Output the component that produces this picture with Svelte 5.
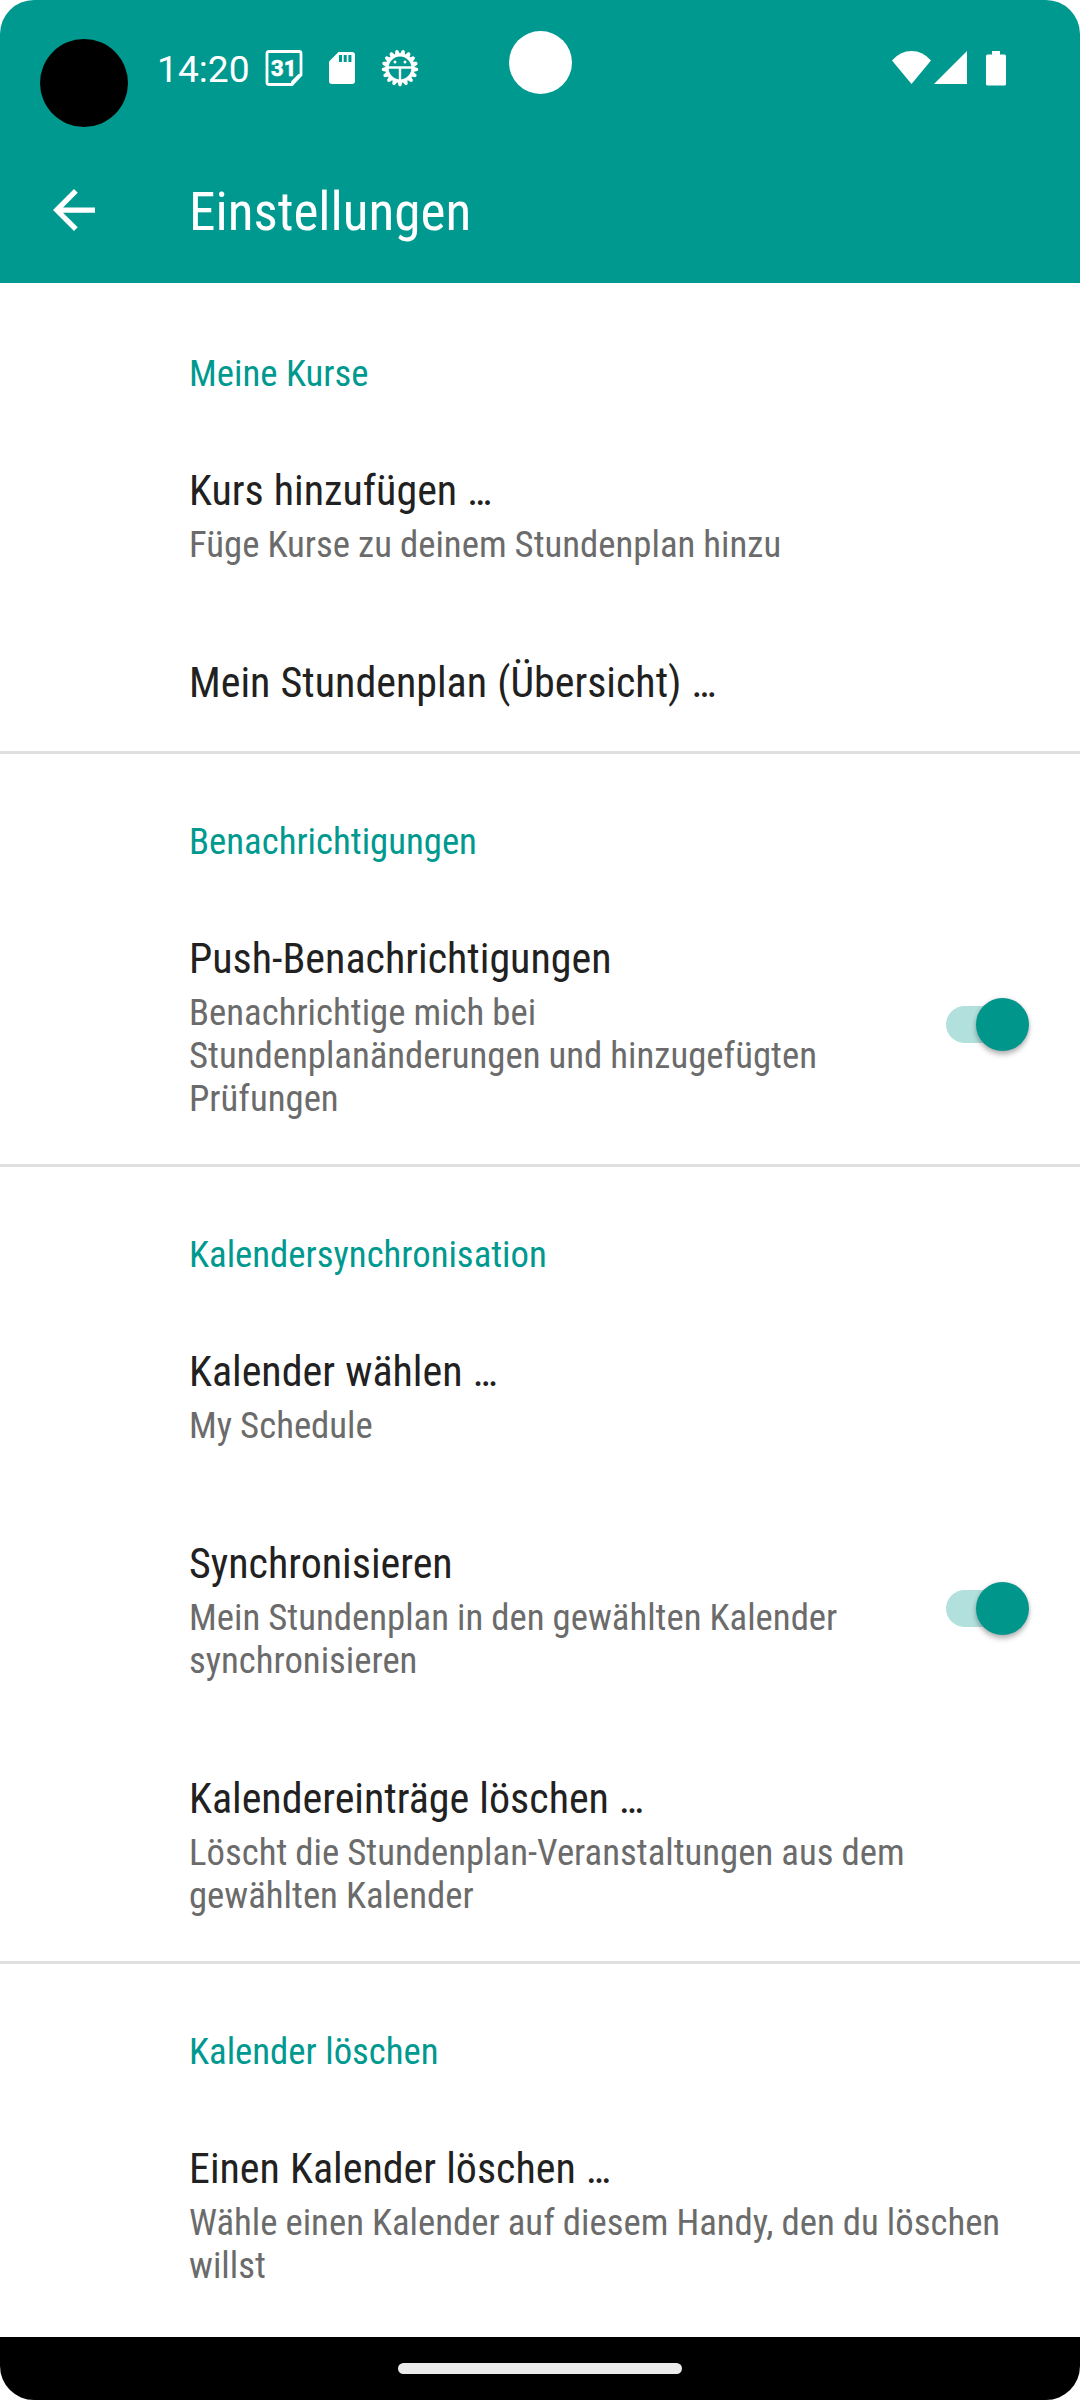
<script>
  const sections = [
    {
      title: 'Meine Kurse',
      items: [
        { title: 'Kurs hinzufügen …', lines: ['Füge Kurse zu deinem Stundenplan hinzu'] },
        { title: 'Mein Stundenplan (Übersicht) …', lines: [] }
      ]
    },
    {
      title: 'Benachrichtigungen',
      items: [
        {
          title: 'Push-Benachrichtigungen',
          lines: ['Benachrichtige mich bei', 'Stundenplanänderungen und hinzugefügten', 'Prüfungen'],
          toggle: true
        }
      ]
    },
    {
      title: 'Kalendersynchronisation',
      items: [
        { title: 'Kalender wählen …', lines: ['My Schedule'] },
        {
          title: 'Synchronisieren',
          lines: ['Mein Stundenplan in den gewählten Kalender', 'synchronisieren'],
          toggle: true
        },
        {
          title: 'Kalendereinträge löschen …',
          lines: ['Löscht die Stundenplan-Veranstaltungen aus dem', 'gewählten Kalender']
        }
      ]
    },
    {
      title: 'Kalender löschen',
      items: [
        {
          title: 'Einen Kalender löschen …',
          lines: ['Wähle einen Kalender auf diesem Handy, den du löschen', 'willst']
        }
      ]
    }
  ];

  // 17 gear teeth, the first one pointing straight down
  const teeth = Array.from({ length: 17 }, (_, i) => 180 + (i * 360) / 17);
</script>

<div class="screen">
  <header>
    <div class="status">
      <span class="time">14:20</span>
      <svg class="calendar" width="38" height="38" viewBox="0 0 38 38">
        <path d="M4 2.500H34Q36 2.500 36 4.500V26L27 35.500H4Q2 35.500 2 33.500V4.500Q2 2.500 4 2.500Z" fill="none" stroke="#fff" stroke-width="2.800" />
        <path d="M37 25H33.500L26 32.500V36.500Z" fill="#fff" />
        <text x="18.700" y="26.500" text-anchor="middle" font-size="22" font-weight="800" fill="#fff" stroke="#fff" stroke-width=".5">31</text>
      </svg>
      <svg class="sd" width="26" height="32" viewBox="0 0 26 32">
        <path d="M9.500 0H23Q26 0 26 3V29Q26 32 23 32H3Q0 32 0 29V9.500Z" fill="#fff" />
        <path d="M10 3H13V10H10ZM14.700 3H17.700V10H14.700ZM19.400 3H22.400V10H19.400Z" fill="#00998f" />
      </svg>
      <svg class="gear" width="38" height="38" viewBox="-19 -19 38 38">
        {#each teeth as angle}
          <path d="M-2.800 -13L-1.500 -17.500Q0 -19.200 1.500 -17.500L2.800 -13Z" transform="rotate({angle})" fill="#fff" />
        {/each}
        <circle r="13" fill="none" stroke="#fff" stroke-width="3.200" />
        <path d="M-12 -.500H12M0 0V12" stroke="#fff" stroke-width="2.400" />
        <circle cx="-5" cy="-6" r="1.500" fill="#fff" />
        <circle cx="5" cy="-6" r="1.500" fill="#fff" />
      </svg>
      <svg class="signals" width="115" height="35" viewBox="0 0 115 35">
        <path d="M0 9.500Q8 0 19.500 0T39 9.500L19.500 33Z" fill="#fff" />
        <path d="M75 0V33H42Z" fill="#fff" />
        <path d="M100 0H108V3.500H112.500Q114 3.500 114 5V33Q114 34.500 112.500 34.500H95.500Q94 34.500 94 33V5Q94 3.500 95.500 3.500H100Z" fill="#fff" />
      </svg>
    </div>
    <div class="bar">
      <svg class="back" width="42" height="42" viewBox="4 4 16 16">
        <path d="M20 11H7.830l5.590-5.590L12 4l-8 8 8 8 1.410-1.410L7.830 13H20v-2z" fill="#fff" />
      </svg>
      <h1>Einstellungen</h1>
    </div>
    <i class="dot black"></i>
    <i class="dot white"></i>
  </header>
  <main>
    {#each sections as section}
      <section>
        <h2>{section.title}</h2>
        {#each section.items as item}
          <div class="row">
            <div class="copy">
              <h3>{item.title}</h3>
              {#if item.lines.length}
                <p>{item.lines.join('\n')}</p>
              {/if}
            </div>
            {#if item.toggle}
              <div class="switch"><div class="track"><i class="thumb"></i></div></div>
            {/if}
          </div>
        {/each}
      </section>
    {/each}
  </main>
  <footer><i class="pill"></i></footer>
</div>

<style>
  :global(body) { background: #fff; }
  .screen {
    width: 1080px;
    height: 2400px;
    display: flex;
    flex-direction: column;
    overflow: hidden;
    border-radius: 34px;
    background: #fff;
    font-family: 'Roboto Condensed', Roboto, sans-serif;
    font-stretch: 75%;
  }
  h1, h2, h3, p { margin: 0; font-weight: 400; white-space: pre; }
  svg { display: block; flex: none; }
  header {
    position: relative;
    box-sizing: border-box;
    height: 283px;
    flex: none;
    background: #00998f;
    color: #fff;
  }
  .status {
    height: 137px;
    display: flex;
    align-items: flex-start;
    padding: 0 73px 0 157px;
    font-family: Roboto, sans-serif;
    font-stretch: 100%;
  }
  .time { width: 108px; margin-top: 48px; font-size: 37.2px; line-height: 43px; }
  .calendar { margin-top: 49px; }
  .sd { margin: 52px 0 0 26px; }
  .gear { margin: 49px 0 0 26px; }
  .signals { margin: 51px 0 0 auto; }
  .bar { height: 146px; display: flex; align-items: flex-start; padding: 52px 0 0 53px; box-sizing: border-box; }
  .back { margin-right: 94px; }
  h1 { margin-top: -8px; font-size: 53.2px; line-height: 62px; }
  .dot { position: absolute; border-radius: 50%; }
  .black { left: 40px; top: 39px; width: 88px; height: 88px; background: #000; }
  .white { left: 509px; top: 31px; width: 63px; height: 63px; background: #fff; }
  main { flex: 1; }
  section + section { border-top: 3px solid #e0e0e0; }
  h2 {
    height: 135px;
    box-sizing: border-box;
    padding: 69px 0 0 189px;
    font-size: 36.75px;
    line-height: 43px;
    color: #00998f;
  }
  section + section h2 { height: 132px; padding-top: 66px; }
  .row {
    display: flex;
    align-items: center;
    justify-content: space-between;
    padding-right: 51px;
  }
  .copy { padding: 48px 0 44px 189px; }
  h3 { font-size: 42px; line-height: 49px; color: #212121; word-spacing: 0.5px; }
  p { margin-top: 8px; font-size: 36.75px; line-height: 43px; color: #6b6b6b; word-spacing: -0.4px; }
  .switch { width: 83px; padding-bottom: 1px; }
  .track {
    width: 75px;
    height: 37px;
    display: flex;
    align-items: center;
    border-radius: 19px;
    background: #b2e0dc;
  }
  .thumb {
    width: 53px;
    height: 53px;
    flex: none;
    margin-left: 30px;
    border-radius: 50%;
    background: #00968b;
    box-shadow: 0 4px 5px rgba(0, 0, 0, 0.25), 0 0 4px rgba(0, 0, 0, 0.12);
  }
  footer {
    height: 63px;
    flex: none;
    display: flex;
    align-items: center;
    justify-content: center;
    background: #000;
  }
  .pill { width: 284px; height: 11px; border-radius: 6px; background: #ebebeb; }
</style>
